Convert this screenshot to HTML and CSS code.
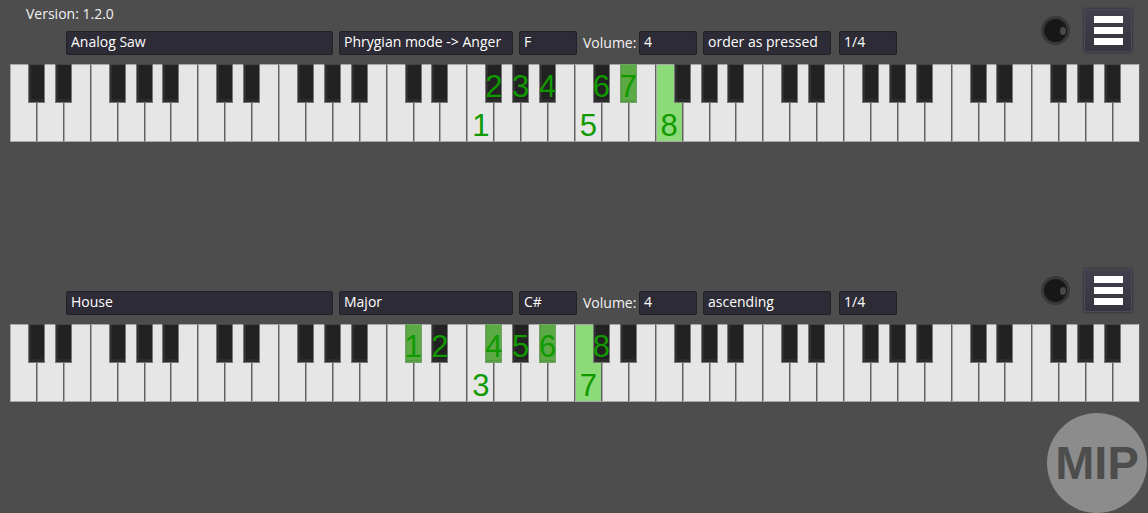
FILE: index.html
```
<!DOCTYPE html>
<html lang="en">
<head>
<meta charset="utf-8">
<meta name="viewport" content="width=device-width, initial-scale=1">
<title>MIP</title>
<link rel="stylesheet" href="styles.css">
</head>
<body>
<main>
  <section class="instrument">
    <header class="toolbar">
      <div class="settings">
        <p class="version">Version: 1.2.0</p>
        <div class="controls">
          <select class="field sound" aria-label="Sound"><option>Analog Saw</option></select>
          <select class="field scale" aria-label="Scale"><option>Phrygian mode -&gt; Anger</option></select>
          <select class="field short" aria-label="Root note"><option>F</option></select>
          <div class="volume"><label class="caption" for="volume-1">Volume:</label><select class="field short" id="volume-1"><option>4</option></select></div>
          <div class="arpeggio">
            <select class="field order" aria-label="Note order"><option>order as pressed</option></select>
            <select class="field short" aria-label="Note length"><option>1/4</option></select>
          </div>
        </div>
      </div>
      <div class="actions">
        <button class="knob" aria-label="Record"><span class="glint"></span></button>
        <button class="menu" aria-label="Menu"><span class="bar"></span><span class="bar"></span><span class="bar"></span></button>
      </div>
    </header>
    <div class="keyboard" data-labels="w17:1 b17:2 b18:3 b19:4 w21:5 b21:6 b22:7* w24:8*"></div>
  </section>
  <section class="instrument">
    <header class="toolbar">
      <div class="settings">
        <div class="controls">
          <select class="field sound" aria-label="Sound"><option>House</option></select>
          <select class="field scale" aria-label="Scale"><option>Major</option></select>
          <select class="field short" aria-label="Root note"><option>C#</option></select>
          <div class="volume"><label class="caption" for="volume-2">Volume:</label><select class="field short" id="volume-2"><option>4</option></select></div>
          <div class="arpeggio">
            <select class="field order" aria-label="Note order"><option>ascending</option></select>
            <select class="field short" aria-label="Note length"><option>1/4</option></select>
          </div>
        </div>
      </div>
      <div class="actions">
        <button class="knob" aria-label="Record"><span class="glint"></span></button>
        <button class="menu" aria-label="Menu"><span class="bar"></span><span class="bar"></span><span class="bar"></span></button>
      </div>
    </header>
    <div class="keyboard" data-labels="b14:1* b15:2 w17:3 b17:4* b18:5 b19:6* w21:7* b21:8"></div>
  </section>
</main>
<div class="logo">MIP</div>
<script src="keyboard.js"></script>
</body>
</html>
```
FILE: styles.css
```
* { box-sizing: border-box; }

body {
  margin: 0;
  min-height: 100vh;
  background: #4d4d4d;
  color: #f2f2f2;
  font: 14px/18px "Open Sans", "Noto Sans", sans-serif;
}

.instrument {
  min-height: 260px;
  padding: 0 8px 0 10px;
}

.toolbar {
  display: flex;
  justify-content: space-between;
  align-items: flex-end;
  min-height: 64px;
  padding: 0 8px 0 16px;
}

.settings { padding-bottom: 9px; }

.version { margin: 0 0 8px; }

.controls {
  display: flex;
  align-items: center;
  gap: 6px;
  padding-left: 40px;
}

.volume {
  display: flex;
  align-items: center;
}

.caption { width: 56px; }

.arpeggio {
  display: flex;
  gap: 8px;
}

.field {
  appearance: none;
  height: 24px;
  padding: 0 4px 2px;
  border: 1px solid #222128;
  border-radius: 2px;
  background: #2d2b35;
  color: #fff;
  font: inherit;
}

.sound { width: 267px; }
.scale { width: 174px; }
.order { width: 128px; }
.short { width: 58px; }

.actions {
  display: flex;
  align-items: center;
  gap: 14px;
  padding-bottom: 12px;
}

.knob {
  display: flex;
  justify-content: flex-end;
  align-items: center;
  width: 29px;
  height: 29px;
  padding: 0 1px;
  border: 3px solid #383838;
  border-radius: 50%;
  background: radial-gradient(#171717 60%, #222);
}

.glint {
  width: 6px;
  height: 8px;
  border-radius: 50%;
  background: #484848;
}

.menu {
  display: flex;
  flex-direction: column;
  justify-content: center;
  align-items: center;
  gap: 4px;
  width: 48px;
  height: 43px;
  padding: 0;
  border: 1px solid #4c4959;
  border-radius: 2px;
  background: linear-gradient(#42404d, #37343f);
  box-shadow: 0 0 2px 1px #38373c;
}

.bar {
  width: 29px;
  height: 7px;
  background: #fff;
}

.keyboard {
  display: grid;
  grid-template-columns: repeat(42, 1fr);
  height: 78px;
  color: #109a00;
  font: 31px/30px "Liberation Sans", Arial, sans-serif;
}

.white {
  position: relative;
  display: flex;
  justify-content: center;
  align-items: flex-end;
  min-width: 0;
  border: 1px solid #a5a8a5;
  border-right-color: #606060;
  background: #e6e6e6;
}

.white.on { background: #8cda78; }

.label {
  position: relative;
  z-index: 2;
}

/* Black keys straddle the edge shared by two white keys. */
.black {
  position: absolute;
  z-index: 1;
  top: -1px;
  left: 68%;
  display: flex;
  justify-content: center;
  align-items: flex-end;
  width: 17px;
  height: 39px;
  border: 1px solid #777;
  border-top-color: #444;
  background: #222;
  box-shadow: inset 2px 0 #303030, inset 0 -3px #2b2b2b;
}

.black.on {
  border-color: #71a365;
  background: #5baa46;
  box-shadow: inset 1px 0 #559d42, inset 0 -2px #559d42;
}

.logo {
  position: absolute;
  right: 1px;
  bottom: 0;
  display: grid;
  place-items: center;
  width: 100px;
  height: 100px;
  border-radius: 50%;
  background: #8c8c8c;
  color: #4d4d4d;
  font: bold 47px/50px "Liberation Sans", Arial, sans-serif;
}
```
FILE: keyboard.js
```
const WHITE_KEYS = 42;
const NO_SHARP = [2, 6];

function decorate(key, mark) {
  if (!mark) return;
  const label = document.createElement("span");
  label.className = "label";
  label.textContent = mark.replace("*", "");
  key.append(label);
  if (mark.endsWith("*")) key.classList.add("on");
}

for (const keyboard of document.querySelectorAll(".keyboard")) {
  const marks = Object.fromEntries(
    keyboard.dataset.labels.split(" ").map((entry) => entry.split(":"))
  );
  for (let i = 0; i < WHITE_KEYS; i++) {
    const white = document.createElement("div");
    white.className = "white";
    decorate(white, marks["w" + i]);
    if (!NO_SHARP.includes(i % 7)) {
      const black = document.createElement("div");
      black.className = "black";
      decorate(black, marks["b" + i]);
      white.append(black);
    }
    keyboard.append(white);
  }
}
```
